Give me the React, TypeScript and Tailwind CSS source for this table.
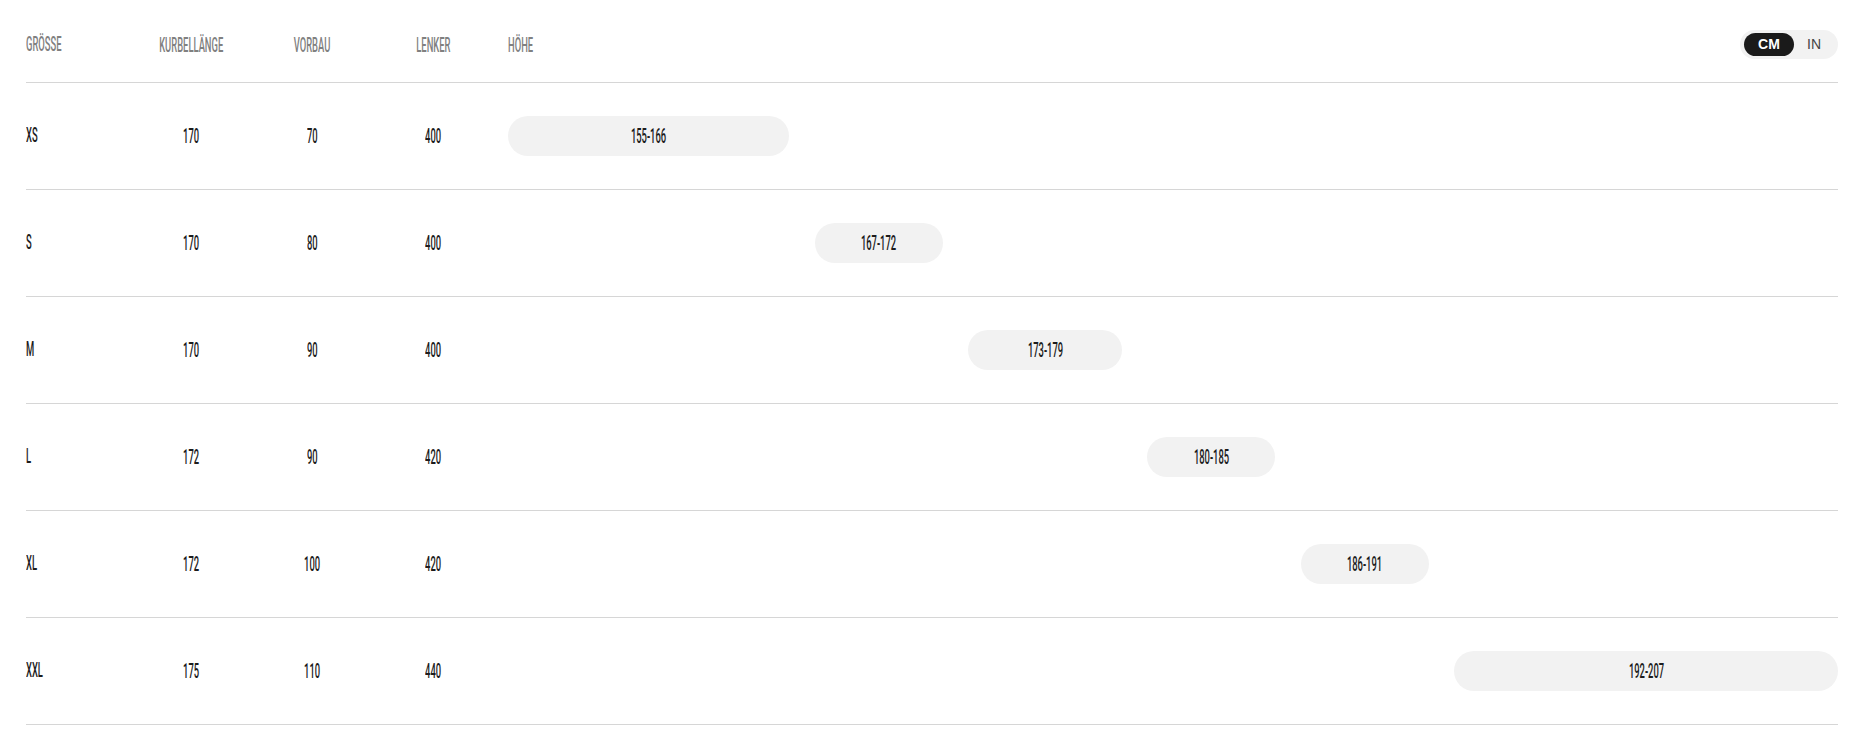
import React from "react";

// size chart rows
interface SizeRow {
  size: string;
  crank: string;
  stem: string;
  bar: string;
  min: number;
  max: number;
}

const rows: SizeRow[] = [
  { size: "XS", crank: "170", stem: "70", bar: "400", min: 155, max: 166 },
  { size: "S", crank: "170", stem: "80", bar: "400", min: 167, max: 172 },
  { size: "M", crank: "170", stem: "90", bar: "400", min: 173, max: 179 },
  { size: "L", crank: "172", stem: "90", bar: "420", min: 180, max: 185 },
  { size: "XL", crank: "172", stem: "100", bar: "420", min: 186, max: 191 },
  { size: "XXL", crank: "175", stem: "110", bar: "440", min: 192, max: 207 },
];

const RANGE_MIN = 155;
const RANGE_MAX = 207;

const gridCols = "grid grid-cols-[110px_111px_130px_113px_1fr] items-center";

// narrow display type, squeezed horizontally
const Cond: React.FC<{ children: React.ReactNode; left?: boolean; className?: string }> = ({
  children,
  left,
  className = "",
}) => (
  <span
    className={`inline-block scale-x-[0.47] whitespace-nowrap font-['Roboto',sans-serif] text-[20px] font-medium leading-none ${
      left ? "origin-left" : "origin-center"
    } ${className}`}
  >
    {children}
  </span>
);

const UnitToggle: React.FC = () => (
  <div className="flex h-[29px] items-center rounded-full bg-[#f2f2f2] px-[4px] font-['Liberation_Sans',Arial,sans-serif] text-[14px]">
    <span className="flex h-[23px] w-[50px] items-center justify-center rounded-full bg-[#1a1a1a] font-bold text-white">
      CM
    </span>
    <span className="w-[40px] text-center text-[#444]">IN</span>
  </div>
);

const App: React.FC = () => {
  return (
    <div className="min-h-screen bg-white pl-[26px] pr-[27px] text-[#1c1c1c]">
      {/* header */}
      <div className={`${gridCols} h-[83px] border-b border-[#d6d6d6] pt-[7px] text-[#808080]`}>
        <div>
          <Cond left>GRÖSSE</Cond>
        </div>
        <div className="flex justify-center">
          <Cond>KURBELLÄNGE</Cond>
        </div>
        <div className="flex justify-center">
          <Cond>VORBAU</Cond>
        </div>
        <div className="flex justify-center">
          <Cond>LENKER</Cond>
        </div>
        <div className="flex items-center justify-between pl-[18px]">
          <Cond left>HÖHE</Cond>
          <UnitToggle />
        </div>
      </div>

      {rows.map((r) => {
        const span = RANGE_MAX - RANGE_MIN;
        const left = ((r.min - RANGE_MIN) / span) * 100;
        const width = ((r.max - r.min) / span) * 100;
        return (
          <div key={r.size} className={`${gridCols} h-[107px] border-b border-[#d6d6d6]`}>
            <div>
              <Cond left>{r.size}</Cond>
            </div>
            <div className="flex justify-center">
              <Cond>{r.crank}</Cond>
            </div>
            <div className="flex justify-center">
              <Cond>{r.stem}</Cond>
            </div>
            <div className="flex justify-center">
              <Cond>{r.bar}</Cond>
            </div>
            <div className="pl-[18px]">
              <div className="relative h-[40px]">
                <div
                  className="absolute top-0 flex h-[40px] items-center justify-center rounded-full bg-[#f2f2f2]"
                  style={{ left: `${left}%`, width: `${width}%` }}
                >
                  <Cond>
                    {r.min}-{r.max}
                  </Cond>
                </div>
              </div>
            </div>
          </div>
        );
      })}
    </div>
  );
};

export default App;
